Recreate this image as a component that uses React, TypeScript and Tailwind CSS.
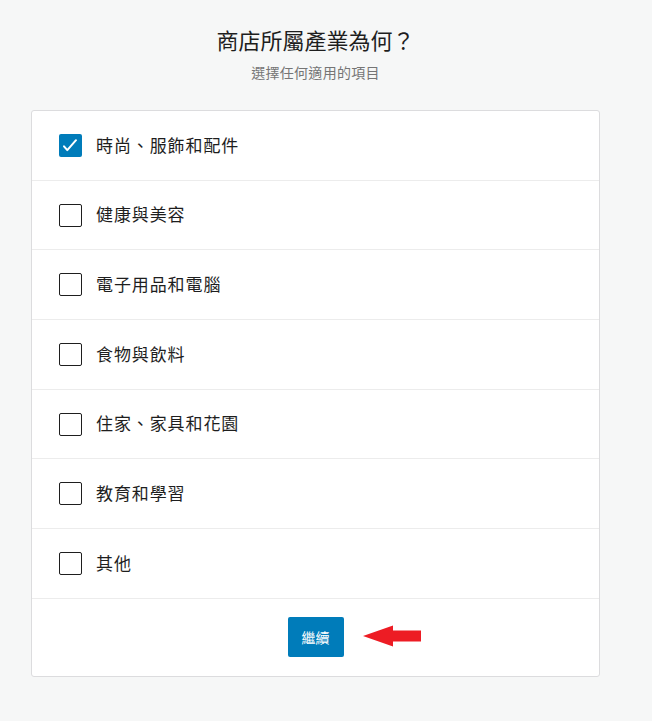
import { useState } from 'react'

const industries = [
  '時尚、服飾和配件',
  '健康與美容',
  '電子用品和電腦',
  '食物與飲料',
  '住家、家具和花園',
  '教育和學習',
  '其他',
]

function Checkbox({ checked }: { checked: boolean }) {
  if (checked) {
    return (
      <span className="flex h-[23px] w-[23px] shrink-0 items-center justify-center rounded-[2px] bg-[#007cba]">
        <svg width="23" height="23" viewBox="0 0 23 23" fill="none">
          <path d="M5 12.3l3.3 3.8L17 6.2" stroke="#fff" strokeWidth="2" strokeLinecap="round" strokeLinejoin="round" />
        </svg>
      </span>
    )
  }
  return <span className="h-[23px] w-[23px] shrink-0 rounded-[2px] border border-[#1e1e1e] bg-white" />
}

export default function App() {
  const [selected, setSelected] = useState<string[]>(['時尚、服飾和配件'])

  function toggle(name: string) {
    setSelected(prev => prev.includes(name) ? prev.filter(n => n !== name) : [...prev, name])
  }

  return (
    <div
      className="min-h-screen bg-[#f6f7f7] text-[#1e1e1e]"
      style={{ fontFamily: '"Noto Sans", "Noto Sans CJK TC", sans-serif' }}
    >
      <div className="w-[569px] ml-[31px] pt-[26px]">
        <h1 className="text-center text-[22px] leading-[28px] font-normal text-[#1e1e1e]">商店所屬產業為何？</h1>
        <p className="mt-[9px] text-center text-[14px] leading-[20px] tracking-[0.3px] text-[#757575]">選擇任何適用的項目</p>

        <div className="mt-[27px] rounded-[3px] border border-[#dcdcde] bg-white">
          {industries.map(name => (
            <label
              key={name}
              onClick={() => toggle(name)}
              className="flex h-[69.7px] cursor-pointer items-center border-b border-[#ececec] pl-[27px]"
            >
              <Checkbox checked={selected.includes(name)} />
              <span className="ml-[14px] text-[17px] tracking-[0.9px] text-[#1e1e1e]">{name}</span>
            </label>
          ))}
          <div className="flex h-[77px] items-center justify-center">
            <div className="relative">
              <button className="h-[40px] w-[56px] rounded-[2px] bg-[#007cba] text-[14px] text-white">繼續</button>
              <svg
                className="absolute left-full top-[8px] ml-[19px]"
                width="58"
                height="22"
                viewBox="0 0 58 22"
              >
                <polygon points="0,11 30,0.5 30,5.5 58,5.5 58,16.5 30,16.5 30,21.5" fill="#ed1c24" />
              </svg>
            </div>
          </div>
        </div>
      </div>
    </div>
  )
}
